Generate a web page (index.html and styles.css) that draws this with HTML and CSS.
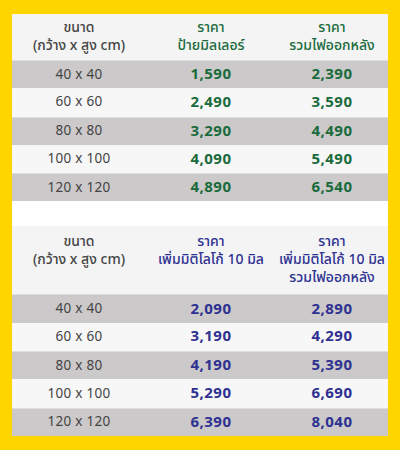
FILE: index.html
```html
<!DOCTYPE html>
<html lang="th">
<head>
<meta charset="utf-8">
<link rel="stylesheet" href="styles.css">
</head>
<body>
<div class="panel">
  <div class="table green">
    <div class="head head1">
      <div class="hc size"><span class="ln">ขนาด</span><span class="ln">(กว้าง x สูง cm)</span></div>
      <div class="hc"><span class="ln">ราคา</span><span class="ln">ป้ายมิลเลอร์</span></div>
      <div class="hc"><span class="ln">ราคา</span><span class="ln">รวมไฟออกหลัง</span></div>
    </div>
    <div class="row dark"><div class="c size">40 x 40</div><div class="c num">1,590</div><div class="c num">2,390</div></div>
    <div class="row light"><div class="c size">60 x 60</div><div class="c num">2,490</div><div class="c num">3,590</div></div>
    <div class="row dark"><div class="c size">80 x 80</div><div class="c num">3,290</div><div class="c num">4,490</div></div>
    <div class="row light"><div class="c size">100 x 100</div><div class="c num">4,090</div><div class="c num">5,490</div></div>
    <div class="row dark"><div class="c size">120 x 120</div><div class="c num">4,890</div><div class="c num">6,540</div></div>
  </div>
  <div class="spacer"></div>
  <div class="table blue">
    <div class="head head2">
      <div class="hc size"><span class="ln">ขนาด</span><span class="ln">(กว้าง x สูง cm)</span></div>
      <div class="hc"><span class="ln">ราคา</span><span class="ln">เพิ่มมิติโลโก้ 10 มิล</span></div>
      <div class="hc"><span class="ln">ราคา</span><span class="ln">เพิ่มมิติโลโก้ 10 มิล</span><span class="ln">รวมไฟออกหลัง</span></div>
    </div>
    <div class="row dark"><div class="c size">40 x 40</div><div class="c num">2,090</div><div class="c num">2,890</div></div>
    <div class="row light"><div class="c size">60 x 60</div><div class="c num">3,190</div><div class="c num">4,290</div></div>
    <div class="row dark"><div class="c size">80 x 80</div><div class="c num">4,190</div><div class="c num">5,390</div></div>
    <div class="row light"><div class="c size">100 x 100</div><div class="c num">5,290</div><div class="c num">6,690</div></div>
    <div class="row dark"><div class="c size">120 x 120</div><div class="c num">6,390</div><div class="c num">8,040</div></div>
  </div>
</div>
</body>
</html>
```
FILE: styles.css
```css
html, body {
  margin: 0;
  padding: 0;
}
body {
  background: #ffd500;
  width: 400px;
  height: 450px;
  font-family: "Noto Sans Thai", "Noto Sans", "DejaVu Sans", sans-serif;
  color: #444444;
}
.panel {
  margin: 14px 12px 0 12px;
  width: 376px;
  background: #ffffff;
}
.head, .row {
  display: grid;
  grid-template-columns: 134px 130px 112px;
  text-align: center;
}
.head {
  background: #f4f4f4;
  font-size: 14px;
  font-weight: 500;
}
.ln {
  display: block;
  height: 18px;
  line-height: 18px;
}
.head1 {
  height: 46px;
  align-items: start;
  padding-top: 5px;
  box-sizing: border-box;
}
.head2 {
  height: 68px;
  align-items: start;
  padding-top: 7px;
  box-sizing: border-box;
}
.hc { white-space: nowrap; }
.hc.size { color: #444444; }
.green .hc:not(.size), .green .num { color: #1a6b3c; }
.blue .hc:not(.size), .blue .num { color: #2e3191; }
.row {
  height: 28.3px;
  align-items: center;
  box-sizing: border-box;
}
.row.dark { background: #cbc9c9; border-top: 1px solid #dedede; }
.row.light { background: #f7f7f7; }
.c.size {
  font-size: 13.5px;
  color: #444444;
  letter-spacing: 0.3px;
}
.c.num {
  font-size: 15px;
  font-weight: 700;
  letter-spacing: 0.5px;
}
.spacer {
  height: 25px;
  background: #ffffff;
}
```
